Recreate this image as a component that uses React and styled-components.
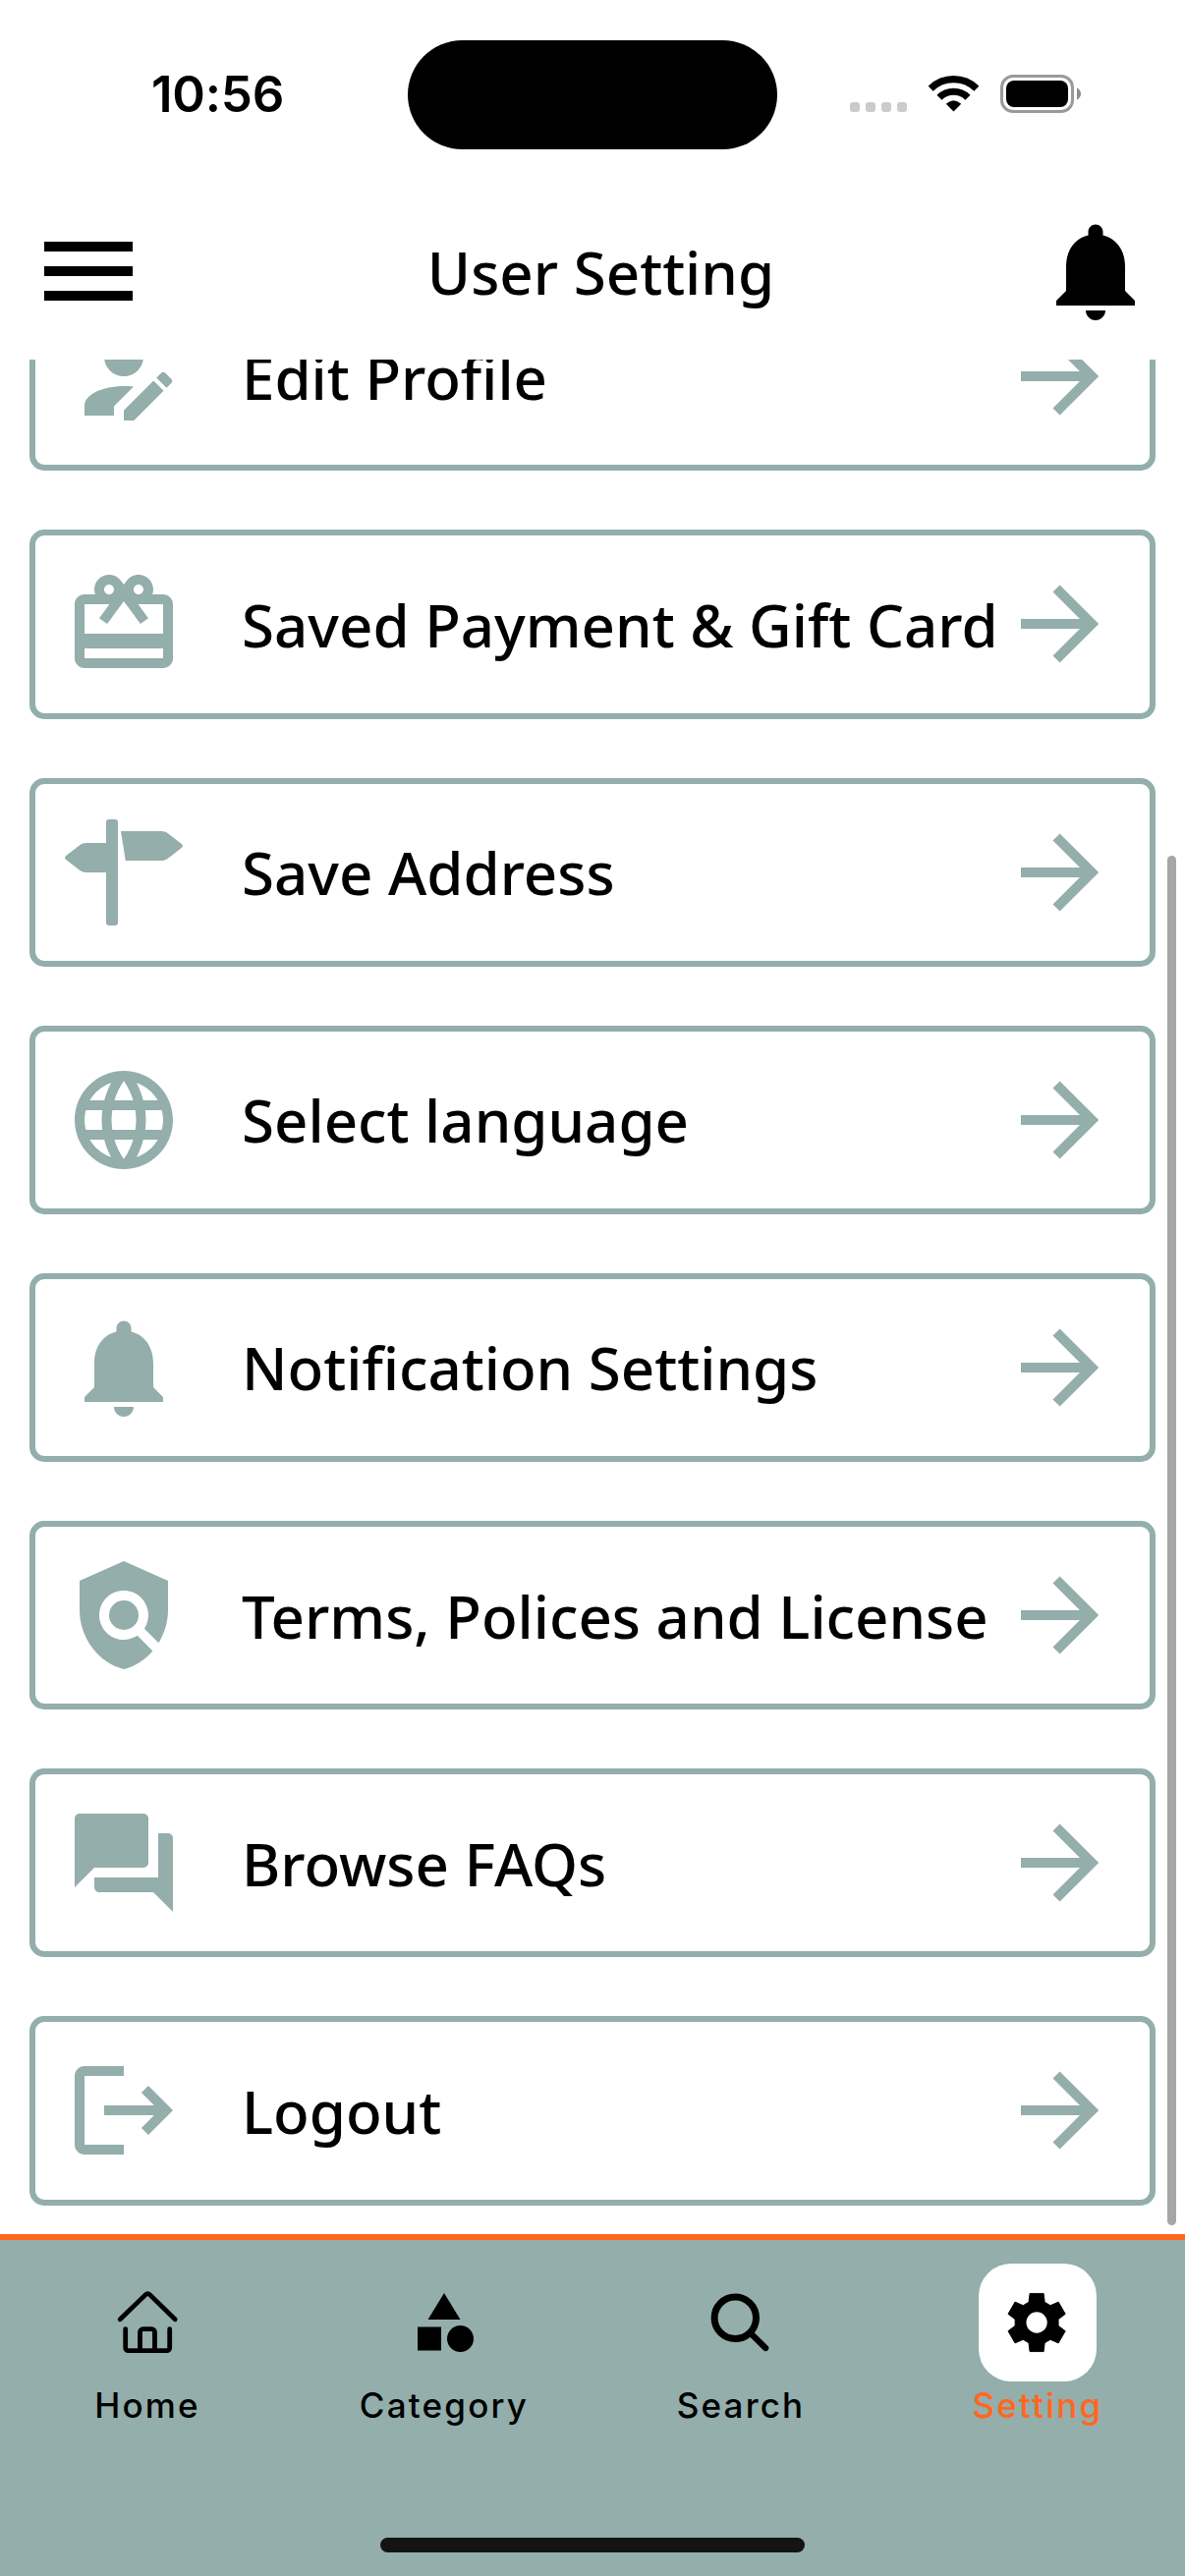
import React from "react";
import styled, { createGlobalStyle } from "styled-components";

const SAGE = "#93aeab";
const ORANGE = "#ff671f";

const GlobalStyle = createGlobalStyle`
  html, body { margin: 0; padding: 0; background: #fff; }
  *, *::before, *::after { box-sizing: border-box; }
`;

const Screen = styled.div`
  width: 1206px;
  height: 2622px;
  display: flex;
  flex-direction: column;
  background: #fff;
  color: #000;
  overflow: hidden;
  font-family: "Noto Sans", sans-serif;
`;

const StatusBar = styled.div`
  height: 186px;
  flex: none;
  display: grid;
  grid-template-columns: 415px 376px 415px;
`;

const Time = styled.div`
  padding: 65px 0 0 154px;
  font: 600 51px/62px Inter, sans-serif;
  letter-spacing: -0.2px;
`;

const Island = styled.div`
  height: 111px;
  margin-top: 41px;
  border-radius: 56px;
  background: #000;
`;

const StatusIcons = styled.div`
  padding: 76px 0 0 74px;
  display: flex;
  align-items: flex-start;
`;

const Signal = styled.svg`
  width: 58px;
  height: 10px;
  margin-top: 28px;
`;

const Wifi = styled.svg`
  width: 51px;
  height: 39px;
  margin-left: 22px;
`;

const Battery = styled.svg`
  width: 82px;
  height: 39px;
  margin-left: 22px;
`;

const Header = styled.header`
  height: 180px;
  flex: none;
  padding: 30px 31px 30px 30px;
  display: flex;
  justify-content: space-between;
  align-items: center;
`;

const Title = styled.h1`
  margin: 0;
  padding: 2px 0 0 18px;
  font-size: 60px;
  font-weight: 500;
  line-height: 82px;
`;

const Glyph = styled.svg`
  width: ${(p) => p.$size || 120}px;
  height: ${(p) => p.$size || 120}px;
  flex: none;
  display: block;
  fill: ${(p) => p.$color || "#000"};
`;

const ListArea = styled.main`
  position: relative;
  flex: 1;
  min-height: 0;
  padding: 0 30px 29.5px;
  display: flex;
  flex-direction: column;
  justify-content: flex-end;
  gap: 60px;
  overflow: hidden;
`;

const Row = styled.div`
  height: 192.17px;
  flex: none;
  padding: 0 31px 0 30px;
  border: 6px solid ${SAGE};
  border-radius: 15px;
  display: flex;
  align-items: center;
`;

const RowLabel = styled.span`
  flex: 1;
  min-width: 0;
  margin-left: 60px;
  padding-top: 1px;
  font-size: 60px;
  font-weight: 500;
  line-height: 82px;
  white-space: nowrap;
`;

const ScrollThumb = styled.div`
  position: absolute;
  right: 9px;
  top: 505px;
  width: 9px;
  height: 1394px;
  border-radius: 5px;
  background: #a6a6a6;
`;

const TabBar = styled.nav`
  height: 348px;
  flex: none;
  border-top: 6px solid ${ORANGE};
  background: ${SAGE};
  display: flex;
  flex-direction: column;
  align-items: center;
  justify-content: space-between;
  padding: 24px 0;
`;

const Tabs = styled.div`
  width: 1206px;
  display: grid;
  grid-template-columns: 300px 304px 300px 304px;
`;

const Tab = styled.div`
  display: flex;
  flex-direction: column;
  align-items: center;
  color: ${(p) => (p.$active ? ORANGE : "#000")};
`;

const TabIcon = styled.div`
  width: 120px;
  height: 120px;
  border-radius: 33px;
  display: flex;
  align-items: center;
  justify-content: center;
  background: ${(p) => (p.$active ? "#fff" : "transparent")};
`;

const TabLabel = styled.span`
  margin-top: 2px;
  font: 500 35px/44px Inter, sans-serif;
  letter-spacing: 2.2px;
`;

const HomeIndicator = styled.div`
  width: 432px;
  height: 15px;
  border-radius: 8px;
  background: #141414;
`;

const PATHS = {
  menu: "M3 6h18v2H3zM3 11h18v2H3zM3 16h18v2H3z",
  bell: "M12 22c1.1 0 2-.9 2-2h-4c0 1.1.89 2 2 2zm6-6v-5c0-3.07-1.64-5.64-4.5-6.32V4c0-.83-.67-1.5-1.5-1.5s-1.5.67-1.5 1.5v.68C7.63 5.36 6 7.92 6 11v5l-2 2v1h16v-1l-2-2z",
  edit: "M21.7 13.35l-1 1-2.05-2.05 1-1c.21-.21.56-.21.77 0l1.28 1.28c.21.21.21.56 0 .77M12 18.94l6.06-6.06 2.05 2.06L14.06 21H12v-2.06M12 14c-4.42 0-8 1.79-8 4v2h6v-1.89l4-4c-.66-.08-1.33-.11-2-.11m0-10a4 4 0 1 0 0 8 4 4 0 0 0 0-8z",
  gift: "M20 6h-2.18c.11-.31.18-.65.18-1 0-1.66-1.34-3-3-3-1.05 0-1.96.54-2.5 1.35l-.5.67-.5-.68C10.96 2.54 10.05 2 9 2 7.34 2 6 3.34 6 5c0 .35.07.69.18 1H4c-1.11 0-2 .89-2 2v11c0 1.11.89 2 2 2h16c1.11 0 2-.89 2-2V8c0-1.11-.89-2-2-2zm-5-2c.55 0 1 .45 1 1s-.45 1-1 1-1-.45-1-1 .45-1 1-1zM9 4c.55 0 1 .45 1 1s-.45 1-1 1-1-.45-1-1 .45-1 1-1zm11 15H4v-2h16v2zm0-5H4V8h5.08L7 10.83 8.62 12 11 8.76l1-1.36 1 1.36L15.38 12 17 10.83 14.92 8H20v6z",
  address: "M19.799 5.165l-2.375-1.83a1.997 1.997 0 0 0-.521-.237A2.035 2.035 0 0 0 16.336 3H9.5l.801 5h6.035c.164 0 .369-.037.566-.098s.387-.145.521-.236l2.375-1.832c.135-.091.202-.212.202-.334s-.067-.243-.201-.335zM8.5 1h-1a.5.5 0 0 0-.5.5V5H3.664c-.166 0-.37.037-.567.099-.198.06-.387.143-.521.236L.201 7.165C.066 7.256 0 7.378 0 7.5c0 .121.066.242.201.335l2.375 1.832c.134.091.323.175.521.235.197.061.401.098.567.098H7v8.5a.5.5 0 0 0 .5.5h1a.5.5 0 0 0 .5-.5v-17a.5.5 0 0 0-.5-.5z",
  globe: "M11.99 2C6.47 2 2 6.48 2 12s4.47 10 9.99 10C17.52 22 22 17.52 22 12S17.52 2 11.99 2zm6.93 6h-2.95c-.32-1.25-.78-2.45-1.38-3.56 1.84.63 3.37 1.91 4.33 3.56zM12 4.04c.83 1.2 1.48 2.53 1.91 3.96h-3.82c.43-1.43 1.08-2.76 1.91-3.96zM4.26 14C4.1 13.36 4 12.69 4 12s.1-1.36.26-2h3.38c-.08.66-.14 1.32-.14 2 0 .68.06 1.34.14 2H4.26zm.82 2h2.95c.32 1.25.78 2.45 1.38 3.56-1.84-.63-3.37-1.9-4.33-3.56zm2.95-8H5.08c.96-1.66 2.49-2.93 4.33-3.56C8.81 5.55 8.35 6.75 8.03 8zM12 19.96c-.83-1.2-1.48-2.53-1.91-3.96h3.82c-.43 1.43-1.08 2.76-1.91 3.96zM14.34 14H9.66c-.09-.66-.16-1.32-.16-2 0-.68.07-1.35.16-2h4.68c.09.65.16 1.32.16 2 0 .68-.07 1.34-.16 2zm.25 5.56c.6-1.11 1.06-2.31 1.38-3.56h2.95c-.96 1.65-2.49 2.93-4.33 3.56zM16.36 14c.08-.66.14-1.32.14-2 0-.68-.06-1.34-.14-2h3.38c.16.64.26 1.31.26 2s-.1 1.36-.26 2h-3.38z",
  policy: "M21 5l-9-4-9 4v6c0 5.55 3.84 10.74 9 12 2.3-.56 4.33-1.9 5.88-3.71l-3.12-3.12c-1.94 1.29-4.58 1.07-6.29-.64-1.95-1.95-1.95-5.12 0-7.07s5.12-1.95 7.07 0c1.71 1.71 1.92 4.35.64 6.29l2.9 2.9C20.29 15.69 21 13.38 21 11V5z",
  forum: "M21 6h-2v9H6v2c0 .55.45 1 1 1h11l4 4V7c0-.55-.45-1-1-1zm-4 6V3c0-.55-.45-1-1-1H3c-.55 0-1 .45-1 1v14l4-4h10c.55 0 1-.45 1-1z",
  logout: "M17 7l-1.41 1.41L18.17 11H8v2h10.17l-2.58 2.58L17 17l5-5zM4 5h8V3H4c-1.1 0-2 .9-2 2v14c0 1.1.9 2 2 2h8v-2H4V5z",
  arrow: "M4 11v2h12l-5.5 5.5 1.42 1.42L19.84 12l-7.92-7.92L10.5 5.5 16 11H4z",
};

const Icon = ({ name, color, box = 24 }) => (
  <Glyph viewBox={`0 0 ${box} ${box}`} $color={color}>
    <path d={PATHS[name]} />
    {name === "policy" && <circle cx="12" cy="12" r="3" />}
  </Glyph>
);

const HomeIcon = () => (
  <Glyph viewBox="0 0 72 72" $size={72}>
    <g fill="none" stroke="#000" strokeWidth="4.8" strokeLinecap="round" strokeLinejoin="round">
      <path d="M8.2 32.8L34.2 7.6a3 3 0 0 1 4.2 0L64.2 32.8" />
      <path d="M13.7 42.7v19a3 3 0 0 0 3 3h39a3 3 0 0 0 3-3v-19" />
      <path d="M28.5 64.5V45.7a3 3 0 0 1 3-3h9a3 3 0 0 1 3 3v18.800" />
    </g>
  </Glyph>
);

const CategoryIcon = () => (
  <Glyph viewBox="0 0 24 24" $size={72}>
    <path d="M12 2l-5.500 9h11zM3 13.500h8v8H3z" />
    <circle cx="17.500" cy="17.500" r="4.500" />
  </Glyph>
);

const SearchIcon = () => (
  <Glyph viewBox="0 0 72 72" $size={72}>
    <g fill="none" stroke="#000" strokeLinecap="round">
      <circle cx="30.300" cy="31.300" r="21.200" strokeWidth="7" />
      <path d="M46.500 47.500L61.200 62" strokeWidth="6.200" />
    </g>
  </Glyph>
);

// One tooth of the gear, repeated every 60 degrees around the hub.
const TOOTH = [
  [-2.7, -6.9],
  [-2.35, -9.85],
  [2.35, -9.85],
  [2.7, -6.9],
];

const gearPoints = Array.from({ length: 6 }, (_, i) => {
  const a = (i * Math.PI) / 3;
  return TOOTH.map(
    ([x, y]) =>
      `${(x * Math.cos(a) - y * Math.sin(a)).toFixed(2)},${(x * Math.sin(a) + y * Math.cos(a)).toFixed(2)}`
  ).join(" ");
}).join(" ");

const GearIcon = () => (
  <Glyph viewBox="-11.7 -12 24 24" $size={72}>
    <polygon points={gearPoints} stroke="#000" strokeWidth="0.3" strokeLinejoin="round" />
    <circle r="3.550" fill="#fff" />
  </Glyph>
);

const rows = [
  { icon: "edit", label: "Edit Profile" },
  { icon: "gift", label: "Saved Payment & Gift Card" },
  { icon: "address", label: "Save Address", box: 20 },
  { icon: "globe", label: "Select language" },
  { icon: "bell", label: "Notification Settings" },
  { icon: "policy", label: "Terms, Polices and License" },
  { icon: "forum", label: "Browse FAQs" },
  { icon: "logout", label: "Logout" },
];

const tabs = [
  { label: "Home", Art: HomeIcon },
  { label: "Category", Art: CategoryIcon },
  { label: "Search", Art: SearchIcon },
  { label: "Setting", Art: GearIcon, active: true },
];

export default function App() {
  return (
    <Screen>
      <GlobalStyle />
      <StatusBar>
        <Time>10:56</Time>
        <Island />
        <StatusIcons>
          <Signal viewBox="0 0 58 10" fill="#cbcbcb">
            {[0, 16, 32, 48].map((x) => (
              <rect key={x} x={x} y="0" width="10" height="10" rx="3" />
            ))}
          </Signal>
          <Wifi viewBox="-25.5 -38 51 39">
            <g fill="none" stroke="#000">
              <path d="M-23.3 -23.8A33.3 33.3 0 0 1 23.3 -23.8" strokeWidth="7.2" />
              <path d="M-14.5 -14.8A20.7 20.7 0 0 1 14.5 -14.8" strokeWidth="7.2" />
            </g>
            <path d="M-7.7 -8.200Q0 -15.500 7.700 -8.200L0 -0.400z" />
          </Wifi>
          <Battery viewBox="0 0 82 39">
            <rect x="1.5" y="1.5" width="72" height="36" rx="11.5" fill="none" stroke="#9a9a9a" strokeWidth="3" />
            <rect x="6" y="6" width="63" height="27" rx="8" />
            <path d="M78 13.500v12c2.400-1 4-3.400 4-6s-1.600-5-4-6z" fill="#8c8c8c" />
          </Battery>
        </StatusIcons>
      </StatusBar>
      <Header>
        <Icon name="menu" />
        <Title>User Setting</Title>
        <Icon name="bell" />
      </Header>
      <ListArea>
        {rows.map(({ icon, label, box }) => (
          <Row key={label}>
            <Icon name={icon} color={SAGE} box={box} />
            <RowLabel>{label}</RowLabel>
            <Icon name="arrow" color={SAGE} />
          </Row>
        ))}
        <ScrollThumb />
      </ListArea>
      <TabBar>
        <Tabs>
          {tabs.map(({ label, Art, active }) => (
            <Tab key={label} $active={active}>
              <TabIcon $active={active}>
                <Art />
              </TabIcon>
              <TabLabel>{label}</TabLabel>
            </Tab>
          ))}
        </Tabs>
        <HomeIndicator />
      </TabBar>
    </Screen>
  );
}
